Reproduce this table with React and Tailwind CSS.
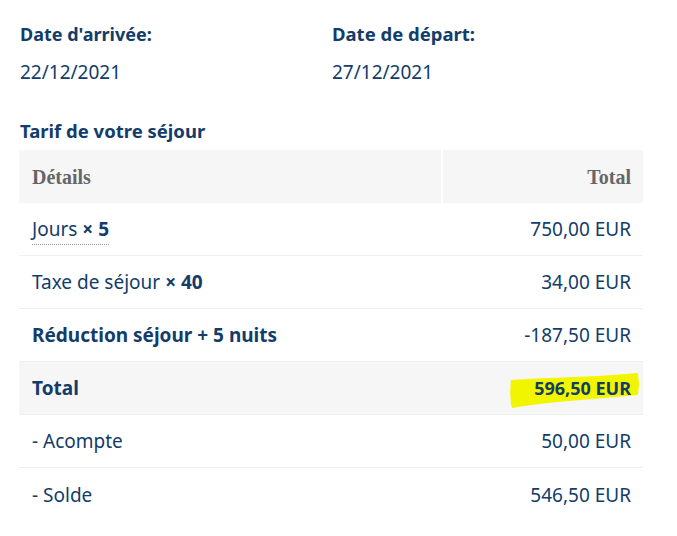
import React from 'react';

const rows = [
  { label: 'Jours', mult: '× 5', total: '750,00 EUR', dotted: true },
  { label: 'Taxe de séjour', mult: '× 40', total: '34,00 EUR' },
  { label: 'Réduction séjour + 5 nuits', total: '-187,50 EUR', boldLabel: true },
  { label: 'Total', total: '596,50 EUR', boldLabel: true, boldTotal: true, grey: true, highlight: true },
  { label: '- Acompte', total: '50,00 EUR' },
  { label: '- Solde', total: '546,50 EUR', last: true },
];

export default function App() {
  return (
    <div className="w-[677px] h-[536px] bg-white text-[#123c69] font-['Noto_Sans',sans-serif] text-[19px] px-[19px] pt-[21px]">
      {/* Dates */}
      <div className="flex">
        <div className="w-[313px] pl-px">
          <div className="font-bold text-[18px] leading-[26px]">Date d'arrivée:</div>
          <div className="mt-[12px] leading-[26px]">22/12/2021</div>
        </div>
        <div>
          <div className="font-bold text-[18.5px] leading-[26px]">Date de départ:</div>
          <div className="mt-[12px] leading-[26px]">27/12/2021</div>
        </div>
      </div>

      <div className="mt-[33px] font-bold text-[18.5px] leading-[26px] pl-px">Tarif de votre séjour</div>

      {/* Table */}
      <div className="mt-[6px] w-[624px]">
        <div className="flex h-[53px] bg-[#f6f6f6] font-['Liberation_Serif',serif] font-bold text-[#666] text-[20px]">
          <div className="w-[424px] flex items-center pl-[13px] border-r-2 border-white">Détails</div>
          <div className="flex-1 flex items-center justify-end pr-[12px]">Total</div>
        </div>
        {rows.map((r) => (
          <div
            key={r.label}
            className={`flex items-center justify-between h-[53px] pl-[13px] pr-[12px] leading-[26px] ${r.last ? '' : 'border-b border-[#f0f0f0]'} ${r.grey ? 'bg-[#f6f6f6]' : ''}`}
          >
            <div className={r.boldLabel ? 'font-bold' : ''}>
              {r.dotted ? (
                <span className="border-b border-dotted border-[#8a9bb0] pb-[2px]">
                  {r.label} <span className="font-bold">{r.mult}</span>
                </span>
              ) : (
                <span>
                  {r.label}
                  {r.mult && <span className="font-bold"> {r.mult}</span>}
                </span>
              )}
            </div>
            <div className={`relative ${r.boldTotal ? 'font-bold text-[18px]' : ''}`}>
              {r.highlight && (
                <svg className="absolute right-[-9px] top-[-3px]" width="132" height="38" viewBox="0 0 132 38">
                  <path
                    d="M3 8 C20 7 60 5 90 4 C105 3 118 2 130 1 L131 12 L130 23 C110 25 80 27 50 30 C30 32 15 34 4 36 C2 30 3 26 2 20 C3 16 2 12 3 8 Z"
                    fill="#f2f500"
                  />
                </svg>
              )}
              <span className="relative">{r.total}</span>
            </div>
          </div>
        ))}
      </div>
    </div>
  );
}
